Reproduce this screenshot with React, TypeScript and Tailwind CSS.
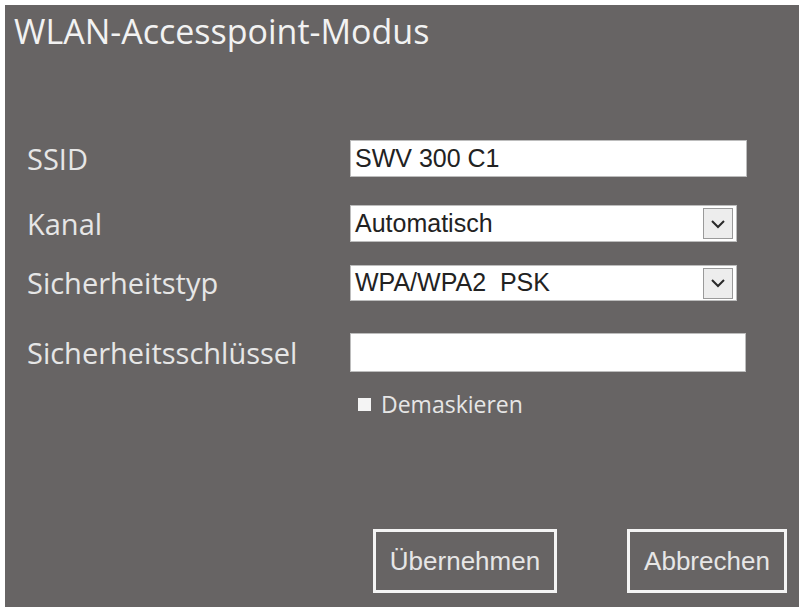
import React from "react";

function Chevron() {
  return (
    <div className="flex h-full w-[30px] items-center justify-center border border-[#9a9a9a] bg-[#ededed]">
      <svg width="16" height="10" viewBox="0 0 16 10" fill="none">
        <path d="M2 2 L8 8 L14 2" stroke="#2a2a2a" strokeWidth="2" />
      </svg>
    </div>
  );
}

const uiFont = { fontFamily: "'Open Sans', Lato, sans-serif" };
const inputFont = { fontFamily: "'Liberation Sans', Arial, sans-serif" };

function Label({ children }: { children: React.ReactNode }) {
  return (
    <div className="w-[323px] shrink-0 text-[29px] leading-[36px] text-[#e6e6e6]" style={uiFont}>
      {children}
    </div>
  );
}

export default function App() {
  return (
    <div className="h-[607px] w-[804px] bg-white pl-[5px] pt-[5px] pr-[5px]">
      <div className="flex h-[602px] flex-col bg-[#676464] pl-[22px]">
        <div className="-ml-[13px] mt-[5px] text-[34px] leading-[42px] text-[#f2f2f2]" style={uiFont}>
          WLAN-Accesspoint-Modus
        </div>

        <div className="mt-[88px] flex h-[37px] items-center">
          <Label>SSID</Label>
          <div className="flex h-full w-[397px] items-center border border-[#bdbdbd] bg-white pl-[4px] text-[25px] text-[#222]" style={inputFont}>
            SWV 300 C1
          </div>
        </div>

        <div className="mt-[28px] flex h-[37px] items-center">
          <Label>Kanal</Label>
          <div className="flex h-full w-[387px] items-center border border-[#bdbdbd] bg-white pl-[4px] pr-[3px] text-[25px] text-[#222]" style={inputFont}>
            <span className="flex-1">Automatisch</span>
            <div className="h-[31px]"><Chevron /></div>
          </div>
        </div>

        <div className="mt-[23px] flex h-[36px] items-center">
          <Label>Sicherheitstyp</Label>
          <div className="flex h-full w-[387px] items-center border border-[#bdbdbd] bg-white pl-[4px] pr-[3px] text-[25px] text-[#222]" style={inputFont}>
            <span className="flex-1">WPA/WPA2&nbsp;&nbsp;PSK</span>
            <div className="h-[31px]"><Chevron /></div>
          </div>
        </div>

        <div className="mt-[32px] flex h-[39px] items-center">
          <Label>Sicherheitsschlüssel</Label>
          <div className="h-full w-[396px] border border-[#bdbdbd] bg-white" />
        </div>

        <div className="ml-[331px] mt-[18px] flex items-center gap-[10px]">
          <div className="h-[13px] w-[13px] bg-[#f4f4f4]" />
          <span className="text-[23px] leading-[28px] text-[#e6e6e6]" style={uiFont}>
            Demaskieren
          </span>
        </div>

        <div className="mt-[111px] flex">
          <button
            className="ml-[346px] flex h-[64px] w-[184px] items-center justify-center border-[3px] border-[#f4f4f4] text-[26px] text-[#e6e6e6]"
            style={inputFont}
          >
            Übernehmen
          </button>
          <button
            className="ml-[70px] flex h-[64px] w-[160px] items-center justify-center border-[3px] border-[#f4f4f4] text-[26px] text-[#e6e6e6]"
            style={inputFont}
          >
            Abbrechen
          </button>
        </div>
      </div>
    </div>
  );
}
